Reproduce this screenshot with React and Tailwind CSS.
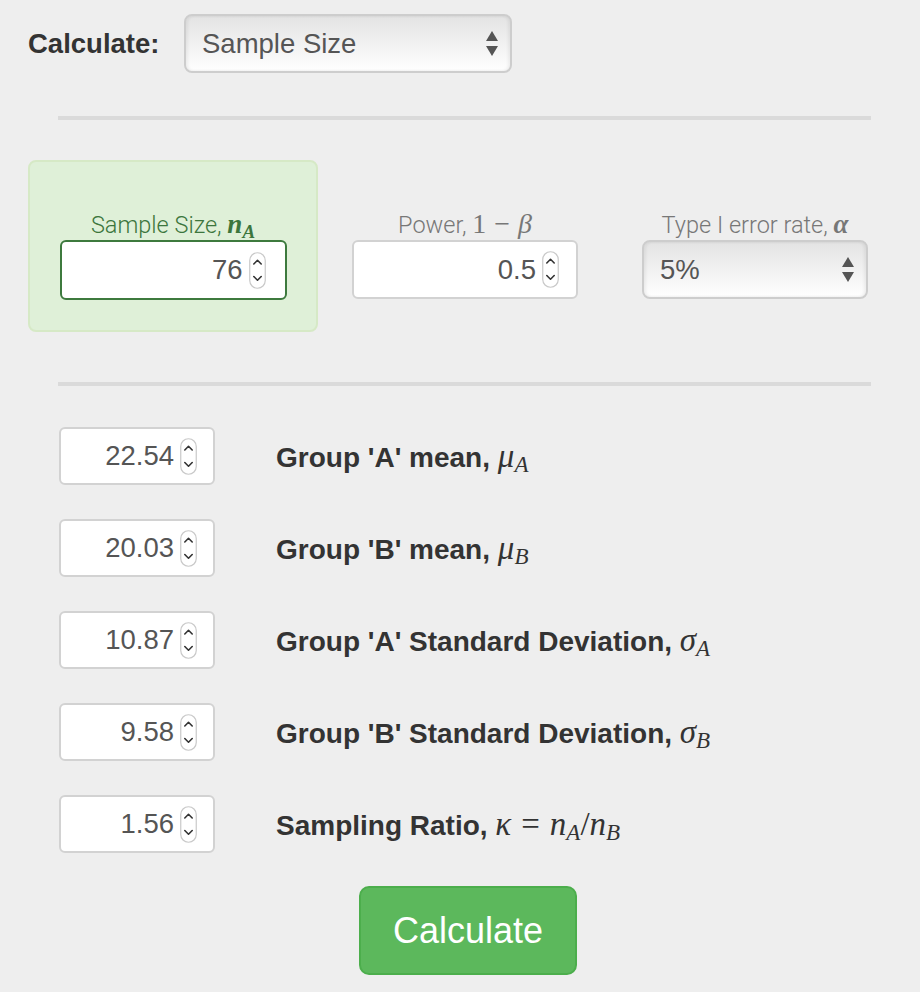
import React from "react";

function Spinner() {
  return (
    <svg width="17" height="37" viewBox="0 0 17 37" className="shrink-0">
      <rect x="0.75" y="0.75" width="15.5" height="35.5" rx="7.75" fill="#fff" stroke="#c9c9c9" strokeWidth="1.2" />
      <path d="M4.8 12 L8.5 8.3 L12.2 12" fill="none" stroke="#333" strokeWidth="1.6" strokeLinecap="round" strokeLinejoin="round" />
      <path d="M4.8 24.5 L8.5 28.2 L12.2 24.5" fill="none" stroke="#333" strokeWidth="1.6" strokeLinecap="round" strokeLinejoin="round" />
    </svg>
  );
}

function SelectArrows() {
  return (
    <svg width="12" height="25" viewBox="0 0 12 25" className="shrink-0">
      <path d="M6 0 L12 10 L0 10 Z" fill="#555" />
      <path d="M0 15 L12 15 L6 25 Z" fill="#555" />
    </svg>
  );
}

function M({ children, bold, className = "" }) {
  return (
    <span className={`font-['Liberation_Serif',serif] italic ${bold ? "font-bold" : "font-normal"} ${className}`}>
      {children}
    </span>
  );
}

function Sub({ children, bold, className = "" }) {
  return (
    <sub className={`font-['Liberation_Serif',serif] italic ${bold ? "font-bold" : "font-normal"} ${className}`}>
      {children}
    </sub>
  );
}

function NumBox({ value, className, pr }) {
  return (
    <div className={`flex items-center justify-end bg-white rounded-[6px] ${className}`}>
      <span className="text-[27.5px] text-[#555] leading-none mr-[6px]">{value}</span>
      <Spinner />
      <div className={pr} />
    </div>
  );
}

function Row({ value, children }) {
  return (
    <div className="flex items-center">
      <NumBox value={value} className="w-[156px] h-[58px] border-2 border-[#d2d2d2]" pr="w-[16px]" />
      <div className="ml-[61px] text-[28px] font-bold text-[#333] leading-none whitespace-nowrap">{children}</div>
    </div>
  );
}

export default function App() {
  return (
    <div className="min-h-[992px] w-[920px] bg-[#eeeeee] text-[#333] font-['Liberation_Sans',Arial,sans-serif]">
      <div className="pl-[28px] pt-[14px] pb-[16px]">
        <div className="flex items-center">
          <span className="text-[27.5px] font-bold w-[156px] leading-none">Calculate:</span>
          <div className="w-[328px] h-[59px] rounded-[8px] border-2 border-[#cdcdcd] bg-gradient-to-b from-[#e3e3e3] to-white shadow-[inset_2px_0_3px_rgba(0,0,0,0.06),inset_-2px_0_3px_rgba(0,0,0,0.06)] flex items-center justify-between pl-[16px] pr-[12px]">
            <span className="text-[27.5px] text-[#555] leading-none">Sample Size</span>
            <SelectArrows />
          </div>
        </div>

        <div className="ml-[30px] mt-[43px] w-[813px] h-[4px] bg-[#dadada]" />

        <div className="mt-[40px] grid grid-cols-[290px_294px_286px]">
          <div className="h-[172px] rounded-[8px] border-2 border-[#d6e9c6] bg-[#dff0d8] pt-[46px] flex flex-col items-center">
            <div className="h-[32px] leading-[32px] text-[23.5px] font-['Roboto',sans-serif] font-light text-[#3c763d] whitespace-nowrap">
              Sample Size, <M bold className="text-[27px]">n</M><Sub bold className="text-[19px]">A</Sub>
            </div>
            <NumBox value="76" className="w-[227px] h-[60px] border-2 border-[#3d7a3e]" pr="w-[19px]" />
          </div>
          <div className="pt-[48px] flex flex-col items-center">
            <div className="h-[32px] leading-[32px] text-[23.5px] font-['Roboto',sans-serif] font-light text-[#777] whitespace-nowrap">
              Power, <span className="font-['Liberation_Serif',serif] text-[28px]">1<span className="mx-[8px]">−</span></span><M className="text-[28px]">β</M>
            </div>
            <NumBox value="0.5" className="w-[226px] h-[59px] border-2 border-[#d2d2d2]" pr="w-[17px]" />
          </div>
          <div className="pt-[48px] flex flex-col items-center">
            <div className="h-[32px] leading-[32px] text-[23.5px] font-['Roboto',sans-serif] font-light text-[#777] whitespace-nowrap">
              Type I error rate, <M bold className="text-[27px]">α</M>
            </div>
            <div className="w-[226px] h-[59px] rounded-[8px] border-2 border-[#cdcdcd] bg-gradient-to-b from-[#e3e3e3] to-white shadow-[inset_2px_0_3px_rgba(0,0,0,0.06),inset_-2px_0_3px_rgba(0,0,0,0.06)] flex items-center justify-between pl-[16px] pr-[12px]">
              <span className="text-[27.5px] text-[#555] leading-none">5%</span>
              <SelectArrows />
            </div>
          </div>
        </div>

        <div className="ml-[30px] mt-[50px] w-[813px] h-[4px] bg-[#dadada]" />

        <div className="mt-[41px] pl-[31px] flex flex-col gap-[34px]">
          <Row value="22.54">Group 'A' mean, <M className="text-[33px]">μ</M><Sub className="text-[23px]">A</Sub></Row>
          <Row value="20.03">Group 'B' mean, <M className="text-[33px]">μ</M><Sub className="text-[23px]">B</Sub></Row>
          <Row value="10.87">Group 'A' Standard Deviation, <M className="text-[33px]">σ</M><Sub className="text-[23px]">A</Sub></Row>
          <Row value="9.58">Group 'B' Standard Deviation, <M className="text-[33px]">σ</M><Sub className="text-[23px]">B</Sub></Row>
          <Row value="1.56">
            Sampling Ratio, <M className="text-[33px]">κ</M>
            <span className="font-['Liberation_Serif',serif] font-normal text-[33px] mx-[10px]">=</span>
            <M className="text-[33px]">n</M><Sub className="text-[23px]">A</Sub>
            <span className="font-['Liberation_Serif',serif] font-normal text-[33px]">/</span>
            <M className="text-[33px]">n</M><Sub className="text-[23px]">B</Sub>
          </Row>
        </div>

        <div className="mt-[33px] w-[880px] flex justify-center">
          <button className="w-[218px] h-[89px] rounded-[10px] bg-[#5cb85c] border-2 border-[#4cae4c] text-white text-[36px] leading-none">
            Calculate
          </button>
        </div>
      </div>
    </div>
  );
}
